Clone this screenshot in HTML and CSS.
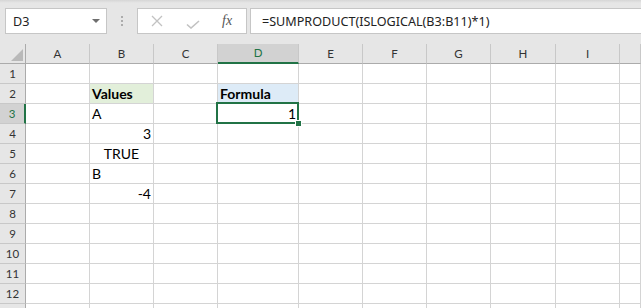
FILE: index.html
```html
<!DOCTYPE html>
<html lang="en">
<head>
    <meta charset="UTF-8">
    <title>Book1 - Excel</title>
    <link rel="stylesheet" href="styles.css">
</head>
<body>

    <div class="toolbar">
        <div class="namebox">
            <span>D3</span>
            <svg width="8" height="4" viewBox="0 0 8 4"><path d="M0 0H8L4 4Z" fill="#6e6e6e"/></svg>
        </div>
        <div class="grip"><i></i><i></i><i></i></div>
        <div class="fxbox">
            <svg class="x-icon" width="12" height="12" viewBox="0 0 12 12"><path d="M1 1L11 11M11 1L1 11" stroke="#c2c2c2" stroke-width="1.3" fill="none"/></svg>
            <svg class="ok-icon" width="14" height="9" viewBox="0 0 14 9"><path d="M1 4.5L5 8L13 1" stroke="#c2c2c2" stroke-width="1.6" fill="none"/></svg>
            <span class="fx">fx</span>
        </div>
        <div class="formula">=SUMPRODUCT(ISLOGICAL(B3:B11)*1)</div>
    </div>

    <div class="sheet">
        <div class="row head">
            <div class="corner"><span></span></div>
            <div>A</div><div>B</div><div>C</div><div class="on">D</div><div>E</div><div>F</div><div>G</div><div>H</div><div>I</div><div></div>
        </div>
        <div class="row"><div class="rh">1</div><div></div><div></div><div></div><div></div><div></div><div></div><div></div><div></div><div></div><div></div></div>
        <div class="row"><div class="rh">2</div><div></div><div class="title green">Values</div><div></div><div class="title blue">Formula</div><div></div><div></div><div></div><div></div><div></div><div></div></div>
        <div class="row"><div class="rh on">3</div><div></div><div>A</div><div></div><div class="num sel">1</div><div></div><div></div><div></div><div></div><div></div><div></div></div>
        <div class="row"><div class="rh">4</div><div></div><div class="num">3</div><div></div><div></div><div></div><div></div><div></div><div></div><div></div><div></div></div>
        <div class="row"><div class="rh">5</div><div></div><div class="mid">TRUE</div><div></div><div></div><div></div><div></div><div></div><div></div><div></div><div></div></div>
        <div class="row"><div class="rh">6</div><div></div><div>B</div><div></div><div></div><div></div><div></div><div></div><div></div><div></div><div></div></div>
        <div class="row"><div class="rh">7</div><div></div><div class="num">-4</div><div></div><div></div><div></div><div></div><div></div><div></div><div></div><div></div></div>
        <div class="row"><div class="rh">8</div><div></div><div></div><div></div><div></div><div></div><div></div><div></div><div></div><div></div><div></div></div>
        <div class="row"><div class="rh">9</div><div></div><div></div><div></div><div></div><div></div><div></div><div></div><div></div><div></div><div></div></div>
        <div class="row"><div class="rh">10</div><div></div><div></div><div></div><div></div><div></div><div></div><div></div><div></div><div></div><div></div></div>
        <div class="row"><div class="rh">11</div><div></div><div></div><div></div><div></div><div></div><div></div><div></div><div></div><div></div><div></div></div>
        <div class="row"><div class="rh">12</div><div></div><div></div><div></div><div></div><div></div><div></div><div></div><div></div><div></div><div></div></div>
        <div class="row last"><div class="rh"></div><div></div><div></div><div></div><div></div><div></div><div></div><div></div><div></div><div></div><div></div></div>
    </div>

</body>
</html>
```

FILE: styles.css
```css
body {
    margin: 0;
    width: 641px;
    height: 308px;
    overflow: hidden;
    background: #fff;
    font-family: Lato, "Liberation Sans", sans-serif;
}

/* formula bar */
.toolbar {
    display: flex;
    height: 44px;
    padding-top: 8px;
    box-sizing: border-box;
    background: linear-gradient(#d6d6d6, #e6e6e6 3px);
    font-family: "Noto Sans", sans-serif;
    font-size: 12.6px;
    color: #222;
}
.namebox {
    margin-left: 5px;
    width: 102px;
    height: 26px;
    box-sizing: border-box;
    border: 1px solid #c6c6c6;
    background: #fff;
    display: flex;
    align-items: center;
    justify-content: space-between;
    padding: 0 6px 0 7px;
}
.grip {
    width: 30px;
    display: flex;
    flex-direction: column;
    align-items: center;
    gap: 2px;
    padding-top: 8px;
}
.grip i {
    width: 2px;
    height: 2px;
    background: #acacac;
}
.fxbox {
    width: 110px;
    height: 26px;
    box-sizing: border-box;
    border: 1px solid #c6c6c6;
    background: #fff;
    display: flex;
    align-items: center;
}
.x-icon {
    margin-left: 13px;
}
.ok-icon {
    margin-left: 23px;
    margin-top: 6px;
}
.fx {
    margin-left: 22px;
    font-family: "Liberation Serif", serif;
    font-style: italic;
    font-size: 14px;
    color: #555;
}
.formula {
    flex: 1;
    margin-left: 3px;
    height: 26px;
    box-sizing: border-box;
    border: 1px solid #c6c6c6;
    border-right: none;
    background: #fff;
    display: flex;
    align-items: center;
    padding-left: 11px;
    white-space: nowrap;
}

/* grid */
.sheet {
    height: 264px;
    overflow: hidden;
}
.row {
    display: grid;
    grid-template-columns: 26px 64px 64px 64px 81px 64px 64px 64px 65px 64px 1fr;
    height: 20px;
}
.row > div {
    box-sizing: border-box;
    border-right: 1px solid #d4d4d4;
    border-bottom: 1px solid #d4d4d4;
    display: flex;
    align-items: flex-end;
    padding: 0 2px;
    font-size: 14px;
    line-height: 18px;
    white-space: nowrap;
    color: #000;
}
.row > .num {
    justify-content: flex-end;
}
.row > .mid {
    justify-content: center;
}
.title {
    font-weight: bold;
}
.green {
    background: #e2efda;
}
.blue {
    background: #ddebf7;
}

.row > .rh,
.head > div {
    background: #e6e6e6;
    justify-content: center;
    align-items: center;
    font-size: 11.5px;
    color: #333;
    padding: 0;
}
.row > .rh {
    border-right-color: #ababab;
    border-bottom-color: #c8c8c8;
    padding-top: 1px;
}
.head > div {
    border-bottom-color: #ababab;
    border-right-color: #c8c8c8;
}
.row > .rh.on {
    background: #d2d2d2;
    border-right: 2px solid #217346;
    color: #217346;
}
.head > .on {
    background: #d2d2d2;
    border-bottom: 2px solid #217346;
    color: #217346;
}
.head > .corner {
    justify-content: flex-end;
    align-items: flex-end;
    padding: 0 2px 2px 0;
    border-right-color: #ababab;
}
.corner span {
    width: 12px;
    height: 12px;
    background: #b9b9b9;
    clip-path: polygon(100% 0, 100% 100%, 0 100%);
}

/* active cell */
.sel {
    position: relative;
}
.sel::after {
    content: "";
    position: absolute;
    top: -2px;
    left: -2px;
    right: -1px;
    bottom: -1px;
    border: 2px solid #217346;
    z-index: 1;
}
.sel::before {
    content: "";
    position: absolute;
    right: -3px;
    bottom: -3px;
    width: 5px;
    height: 5px;
    background: #217346;
    box-shadow: 0 0 0 1px #fff;
    z-index: 2;
}
```
